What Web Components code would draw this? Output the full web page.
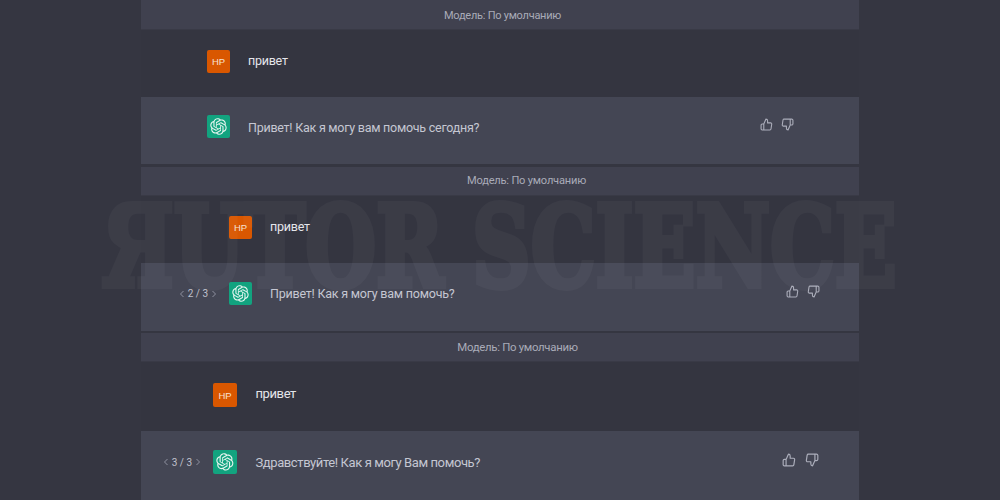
<!DOCTYPE html>
<html lang="ru">
<head>
<meta charset="utf-8">
<title>Модель: По умолчанию</title>
<style>
  html, body { margin: 0; height: 500px; overflow: hidden; background: #353641; }
  body { font-family: Roboto, "Noto Sans", "Liberation Sans", sans-serif; }
</style>
</head>
<body>
<chat-page>
  <chat-group style="--gutter:66px;--avatar:23px;--gap:18px;--text:12.5px;--track:-.25px;--bar-text:11px;--bar-track:-.25px;--bar-shift:5px;--bar-lift:0px;--bar-drop:1px;--bar-h:30px;--user-h:67px;--bot-h:67px;--user-pad:20px;--bot-pad:18px;--bot-drop:1px;--user-lift:2px;--icons-right:65px;--icons-top:21px;--icon:13px;--icon-gap:8px">
    <model-bar>Модель: По умолчанию</model-bar>
    <chat-turn kind="user">привет</chat-turn>
    <chat-turn kind="bot">Привет! Как я могу вам помочь сегодня?</chat-turn>
  </chat-group>
  <chat-group style="--gutter:88px;--avatar:23px;--gap:18px;--text:12.5px;--track:-.22px;--bar-text:11.1px;--bar-track:-.2px;--bar-shift:53px;--bar-lift:2px;--bar-drop:0px;--bar-h:29px;--user-h:67px;--bot-h:68px;--user-pad:20px;--bot-pad:19px;--bot-drop:0px;--user-lift:2px;--icons-right:39px;--icons-top:22px;--icon:13px;--icon-gap:8px;--group-gap:3px">
    <model-bar>Модель: По умолчанию</model-bar>
    <chat-turn kind="user">привет</chat-turn>
    <chat-turn kind="bot" pager="2 / 3">Привет! Как я могу вам помочь?</chat-turn>
  </chat-group>
  <chat-group style="--gutter:72px;--avatar:24px;--gap:18.5px;--text:13px;--track:-.4px;--bar-text:11.4px;--bar-track:-.3px;--bar-shift:35px;--bar-lift:1px;--bar-drop:0px;--bar-h:29px;--user-h:69px;--bot-h:69px;--user-pad:21px;--bot-pad:19px;--bot-drop:0px;--user-lift:4px;--icons-right:40px;--icons-top:22px;--icon:14px;--icon-gap:9px;--group-gap:2px">
    <model-bar>Модель: По умолчанию</model-bar>
    <chat-turn kind="user">привет</chat-turn>
    <chat-turn kind="bot" pager="3 / 3">Здравствуйте! Как я могу Вам помочь?</chat-turn>
  </chat-group>
  <water-mark>ЯUTOR SCIENCE</water-mark>
</chat-page>

<script>
const LOGO_PATH = "M37.5324 16.8707C37.9808 15.5241 38.1363 14.0974 37.9886 12.6859C37.8409 11.2744 37.3934 9.91076 36.676 8.68622C35.6126 6.83404 33.9882 5.3676 32.0373 4.4985C30.0864 3.62941 27.9098 3.40259 25.8215 3.85078C24.8796 2.7893 23.7219 1.94125 22.4257 1.36341C21.1295 0.785575 19.7249 0.491269 18.3058 0.500197C16.1708 0.495044 14.0893 1.16803 12.3614 2.42214C10.6335 3.67624 9.34853 5.44666 8.6917 7.47815C7.30085 7.76286 5.98686 8.3414 4.8377 9.17505C3.68854 10.0087 2.73073 11.0782 2.02839 12.312C0.956464 14.1591 0.498905 16.2988 0.721698 18.4228C0.944492 20.5467 1.83612 22.5449 3.268 24.1293C2.81966 25.4759 2.66413 26.9026 2.81182 28.3141C2.95951 29.7256 3.40701 31.0892 4.12437 32.3138C5.18791 34.1659 6.8123 35.6322 8.76321 36.5013C10.7141 37.3704 12.8907 37.5973 14.9789 37.1492C15.9208 38.2107 17.0786 39.0587 18.3747 39.6366C19.6709 40.2144 21.0755 40.5087 22.4946 40.4998C24.6307 40.5054 26.7133 39.8321 28.4418 38.5772C30.1704 37.3223 31.4556 35.5506 32.1119 33.5179C33.5027 33.2332 34.8167 32.6547 35.9659 31.821C37.115 30.9874 38.0728 29.9178 38.7752 28.684C39.8458 26.8371 40.3023 24.6979 40.0789 22.5748C39.8556 20.4517 38.9639 18.4544 37.5324 16.8707ZM22.4978 37.8849C20.7443 37.8874 19.0459 37.2733 17.6994 36.1501C17.7601 36.117 17.8666 36.0586 17.936 36.0161L25.9004 31.4156C26.1003 31.3019 26.2663 31.137 26.3813 30.9378C26.4964 30.7386 26.5563 30.5124 26.5549 30.2825V19.0542L29.9213 20.998C29.9389 21.0068 29.9541 21.0198 29.9656 21.0359C29.977 21.052 29.9842 21.0707 29.9867 21.0902V30.3889C29.9842 32.375 29.1946 34.2791 27.7909 35.6841C26.3872 37.0892 24.4838 37.8806 22.4978 37.8849ZM6.39227 31.0064C5.51397 29.4888 5.19742 27.7107 5.49804 25.9832C5.55718 26.0187 5.66048 26.0818 5.73461 26.1244L13.699 30.7248C13.8975 30.8408 14.1233 30.902 14.3532 30.902C14.583 30.902 14.8088 30.8408 15.0073 30.7248L24.731 25.1103V28.9979C24.7321 29.0177 24.7283 29.0376 24.7199 29.0556C24.7115 29.0736 24.6988 29.0893 24.6829 29.1012L16.6317 33.7497C14.9096 34.7416 12.8643 35.0097 10.9447 34.4954C9.02506 33.9811 7.38785 32.7263 6.39227 31.0064ZM4.29707 13.6194C5.17156 12.0998 6.55279 10.9364 8.19885 10.3327C8.19885 10.4013 8.19491 10.5228 8.19491 10.6071V19.808C8.19351 20.0378 8.25334 20.2638 8.36823 20.4629C8.48312 20.6619 8.64893 20.8267 8.84863 20.9404L18.5723 26.5542L15.206 28.4979C15.1894 28.5089 15.1703 28.5155 15.1505 28.5173C15.1307 28.5191 15.1107 28.516 15.0924 28.5082L7.04046 23.8557C5.32135 22.8601 4.06716 21.2235 3.55289 19.3046C3.03862 17.3858 3.30624 15.3413 4.29707 13.6194ZM31.955 20.0556L22.2312 14.4411L25.5976 12.4981C25.6142 12.4872 25.6333 12.4805 25.6531 12.4787C25.6729 12.4769 25.6928 12.4801 25.7111 12.4879L33.7631 17.1364C34.9967 17.849 36.0017 18.8982 36.6606 20.1613C37.3194 21.4244 37.6047 22.849 37.4832 24.2684C37.3617 25.6878 36.8382 27.0432 35.9743 28.1759C35.1103 29.3086 33.9415 30.1717 32.6047 30.6641C32.6047 30.5947 32.6047 30.4733 32.6047 30.3889V21.188C32.6066 20.9586 32.5474 20.7328 32.4332 20.5338C32.319 20.3348 32.154 20.1698 31.955 20.0556ZM35.3055 15.0128C35.2464 14.9765 35.1431 14.9142 35.069 14.8717L27.1045 10.2712C26.906 10.1554 26.6803 10.0943 26.4504 10.0943C26.2206 10.0943 25.9948 10.1554 25.7963 10.2712L16.0726 15.8858V11.9982C16.0715 11.9783 16.0753 11.9585 16.0837 11.9405C16.0921 11.9225 16.1048 11.9068 16.1207 11.8949L24.1719 7.25025C25.4053 6.53903 26.8158 6.19376 28.2383 6.25482C29.6608 6.31589 31.0364 6.78077 32.2044 7.59508C33.3723 8.40939 34.2842 9.53945 34.8334 10.8531C35.3826 12.1667 35.5464 13.6095 35.3055 15.0128ZM14.2424 21.9419L10.8752 19.9981C10.8576 19.9893 10.8423 19.9763 10.8309 19.9602C10.8195 19.9441 10.8122 19.9254 10.8098 19.9058V10.6071C10.8107 9.18295 11.2173 7.78848 11.9819 6.58696C12.7466 5.38544 13.8377 4.42659 15.1275 3.82264C16.4173 3.21869 17.8524 2.99464 19.2649 3.1767C20.6775 3.35876 22.0089 3.93941 23.1034 4.85067C23.0427 4.88379 22.937 4.94215 22.8668 4.98473L14.9024 9.58517C14.7025 9.69878 14.5366 9.86356 14.4215 10.0626C14.3065 10.2616 14.2466 10.4877 14.2479 10.7175L14.2424 21.9419ZM16.071 17.9991L20.4018 15.4978L24.7325 17.9975V22.9985L20.4018 25.4983L16.071 22.9985V17.9991Z";

class ChatPage extends HTMLElement {
  constructor() {
    super();
    this.attachShadow({ mode: "open" }).innerHTML = `
      <style>
        :host { display: block; position: relative; height: 500px; overflow: hidden; }
        .column { width: 718px; margin: 0 auto; display: flex; flex-direction: column; }
      </style>
      <div class="column"><slot></slot></div>
      <slot name="over"></slot>
    `;
  }
  connectedCallback() {
    const mark = this.querySelector("water-mark");
    if (mark) mark.slot = "over";
  }
}

class ChatGroup extends HTMLElement {
  constructor() {
    super();
    this.attachShadow({ mode: "open" }).innerHTML = `
      <style>
        :host { display: flex; flex-direction: column; margin-top: var(--group-gap, 0); }
      </style>
      <slot></slot>
    `;
  }
}

class ModelBar extends HTMLElement {
  constructor() {
    super();
    this.attachShadow({ mode: "open" }).innerHTML = `
      <style>
        :host {
          display: flex; align-items: center; justify-content: center;
          height: var(--bar-h); box-sizing: border-box;
          padding: var(--bar-drop) 0 var(--bar-lift) var(--bar-shift);
          background: #40414f; border-bottom: 1px solid #393a46;
          color: #a9abb8; font-size: var(--bar-text); letter-spacing: var(--bar-track);
        }
      </style>
      <slot></slot>
    `;
  }
}

class ChatTurn extends HTMLElement {
  constructor() {
    super();
    this.attachShadow({ mode: "open" });
  }

  connectedCallback() {
    const isBot = this.getAttribute("kind") === "bot";
    const pager = this.getAttribute("pager");
    this.shadowRoot.innerHTML = `
      <style>
        :host {
          display: flex; align-items: flex-start; box-sizing: border-box;
          height: var(--${isBot ? "bot" : "user"}-h);
          padding-top: var(--${isBot ? "bot" : "user"}-pad);
          background: ${isBot ? "#444654" : "#343540"};
          color: ${isBot ? "#c5c7d2" : "#e4e5ea"};
          font-size: var(--text);
        }
        .gutter {
          flex: none; width: var(--gutter); height: var(--avatar);
          display: flex; align-items: center; justify-content: flex-end;
          padding-right: 12px; box-sizing: border-box;
        }
        .text {
          flex: 1; margin-left: var(--gap); height: var(--avatar);
          display: flex; align-items: center; white-space: nowrap;
          letter-spacing: var(--track); box-sizing: border-box;
          ${isBot ? "padding-top: var(--bot-drop);" : "padding-bottom: var(--user-lift);"}
        }
        feedback-icons { margin-right: var(--icons-right); margin-top: calc(var(--icons-top) - var(--${isBot ? "bot" : "user"}-pad)); }
      </style>
      <div class="gutter">${pager ? `<page-switch>${pager}</page-switch>` : ""}</div>
      <chat-avatar kind="${isBot ? "bot" : "user"}"></chat-avatar>
      <div class="text"><slot></slot></div>
      ${isBot ? "<feedback-icons></feedback-icons>" : ""}
    `;
  }
}

class ChatAvatar extends HTMLElement {
  constructor() {
    super();
    this.attachShadow({ mode: "open" });
  }

  connectedCallback() {
    const isBot = this.getAttribute("kind") === "bot";
    this.shadowRoot.innerHTML = `
      <style>
        :host {
          display: flex; flex: none; align-items: center; justify-content: center;
          width: var(--avatar); height: var(--avatar); border-radius: 2px;
          background: ${isBot ? "#12a37f" : "#d95700"};
          color: #f7e0d0; font: 400 9.5px "Liberation Sans", sans-serif;
        }
        svg { width: 74%; height: 74%; display: block; }
      </style>
      ${isBot
        ? `<svg viewBox="0 0 41 41"><path fill="#e6f5f0" d="${LOGO_PATH}"/></svg>`
        : "<span>HP</span>"}
    `;
  }
}

class PageSwitch extends HTMLElement {
  constructor() {
    super();
    this.attachShadow({ mode: "open" }).innerHTML = `
      <style>
        :host { display: flex; align-items: center; gap: 3px; color: #c0c2cd; font-size: 10px; }
        svg { width: 6px; height: 8px; fill: none; stroke: #8f91a0; stroke-width: 1; }
      </style>
      <svg viewBox="0 0 6 8"><path d="M4.5 1 1.5 4 4.5 7"/></svg>
      <span><slot></slot></span>
      <svg viewBox="0 0 6 8"><path d="M1.5 1 4.5 4 1.5 7"/></svg>
    `;
  }
}

class FeedbackIcons extends HTMLElement {
  constructor() {
    super();
    this.attachShadow({ mode: "open" }).innerHTML = `
      <style>
        :host { display: flex; gap: var(--icon-gap); flex: none; }
        svg { width: var(--icon); height: var(--icon); fill: none; stroke: #acaebb; stroke-width: 2; stroke-linecap: round; stroke-linejoin: round; }
      </style>
      <svg viewBox="0 0 24 24"><path d="M14 9V5a3 3 0 0 0-3-3l-4 9v11h11.28a2 2 0 0 0 2-1.7l1.38-9a2 2 0 0 0-2-2.3zM7 22H4a2 2 0 0 1-2-2v-7a2 2 0 0 1 2-2h3"/></svg>
      <svg viewBox="0 0 24 24"><path d="M10 15v4a3 3 0 0 0 3 3l4-9V2H5.72a2 2 0 0 0-2 1.7l-1.38 9a2 2 0 0 0 2 2.3zm7-13h2.67A2.31 2.31 0 0 1 22 4v7a2.31 2.31 0 0 1-2.33 2H17"/></svg>
    `;
  }
}

class WaterMark extends HTMLElement {
  constructor() {
    super();
    this.attachShadow({ mode: "open" }).innerHTML = `
      <style>
        :host {
          position: absolute; left: 102px; top: 185px;
          pointer-events: none; white-space: nowrap;
          font: 700 113px "DejaVu Serif", serif; line-height: 1.1;
          color: #fff; -webkit-text-stroke: 6px #fff;
          opacity: .032;
          transform: scaleX(.72); transform-origin: 0 0;
        }
      </style>
      <slot></slot>
    `;
  }
}

customElements.define("chat-page", ChatPage);
customElements.define("chat-group", ChatGroup);
customElements.define("model-bar", ModelBar);
customElements.define("chat-avatar", ChatAvatar);
customElements.define("page-switch", PageSwitch);
customElements.define("feedback-icons", FeedbackIcons);
customElements.define("chat-turn", ChatTurn);
customElements.define("water-mark", WaterMark);
</script>
</body>
</html>
